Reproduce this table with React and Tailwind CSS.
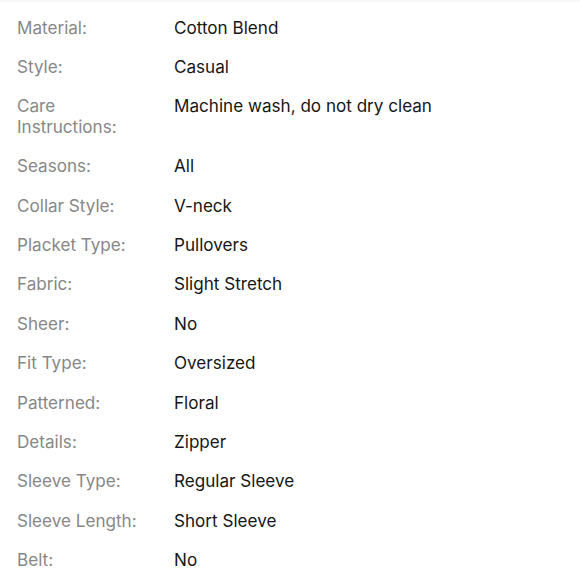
import React from "react";

const specs = [
  ["Material:", "Cotton Blend"],
  ["Style:", "Casual"],
  ["Care Instructions:", "Machine wash, do not dry clean"],
  ["Seasons:", "All"],
  ["Collar Style:", "V-neck"],
  ["Placket Type:", "Pullovers"],
  ["Fabric:", "Slight Stretch"],
  ["Sheer:", "No"],
  ["Fit Type:", "Oversized"],
  ["Patterned:", "Floral"],
  ["Details:", "Zipper"],
  ["Sleeve Type:", "Regular Sleeve"],
  ["Sleeve Length:", "Short Sleeve"],
  ["Belt:", "No"],
];

const App = () => {
  return (
    <div
      className="w-[580px] h-[580px] overflow-hidden bg-white border-t-2 border-[#f6f6f6]"
      style={{ fontFamily: "Inter, 'Liberation Sans', sans-serif" }}
    >
      <div className="flex flex-col gap-[18.9px] pl-[17px] pt-[15.5px]">
        {specs.map(([label, value], i) => (
          <div key={i} className="flex text-[17.1px] leading-[20.5px]">
            <div className="w-[130px] shrink-0 text-[#878787]">{label}</div>
            <div className="ml-[27px] text-[#161616]">{value}</div>
          </div>
        ))}
      </div>
    </div>
  );
};

export default App;
